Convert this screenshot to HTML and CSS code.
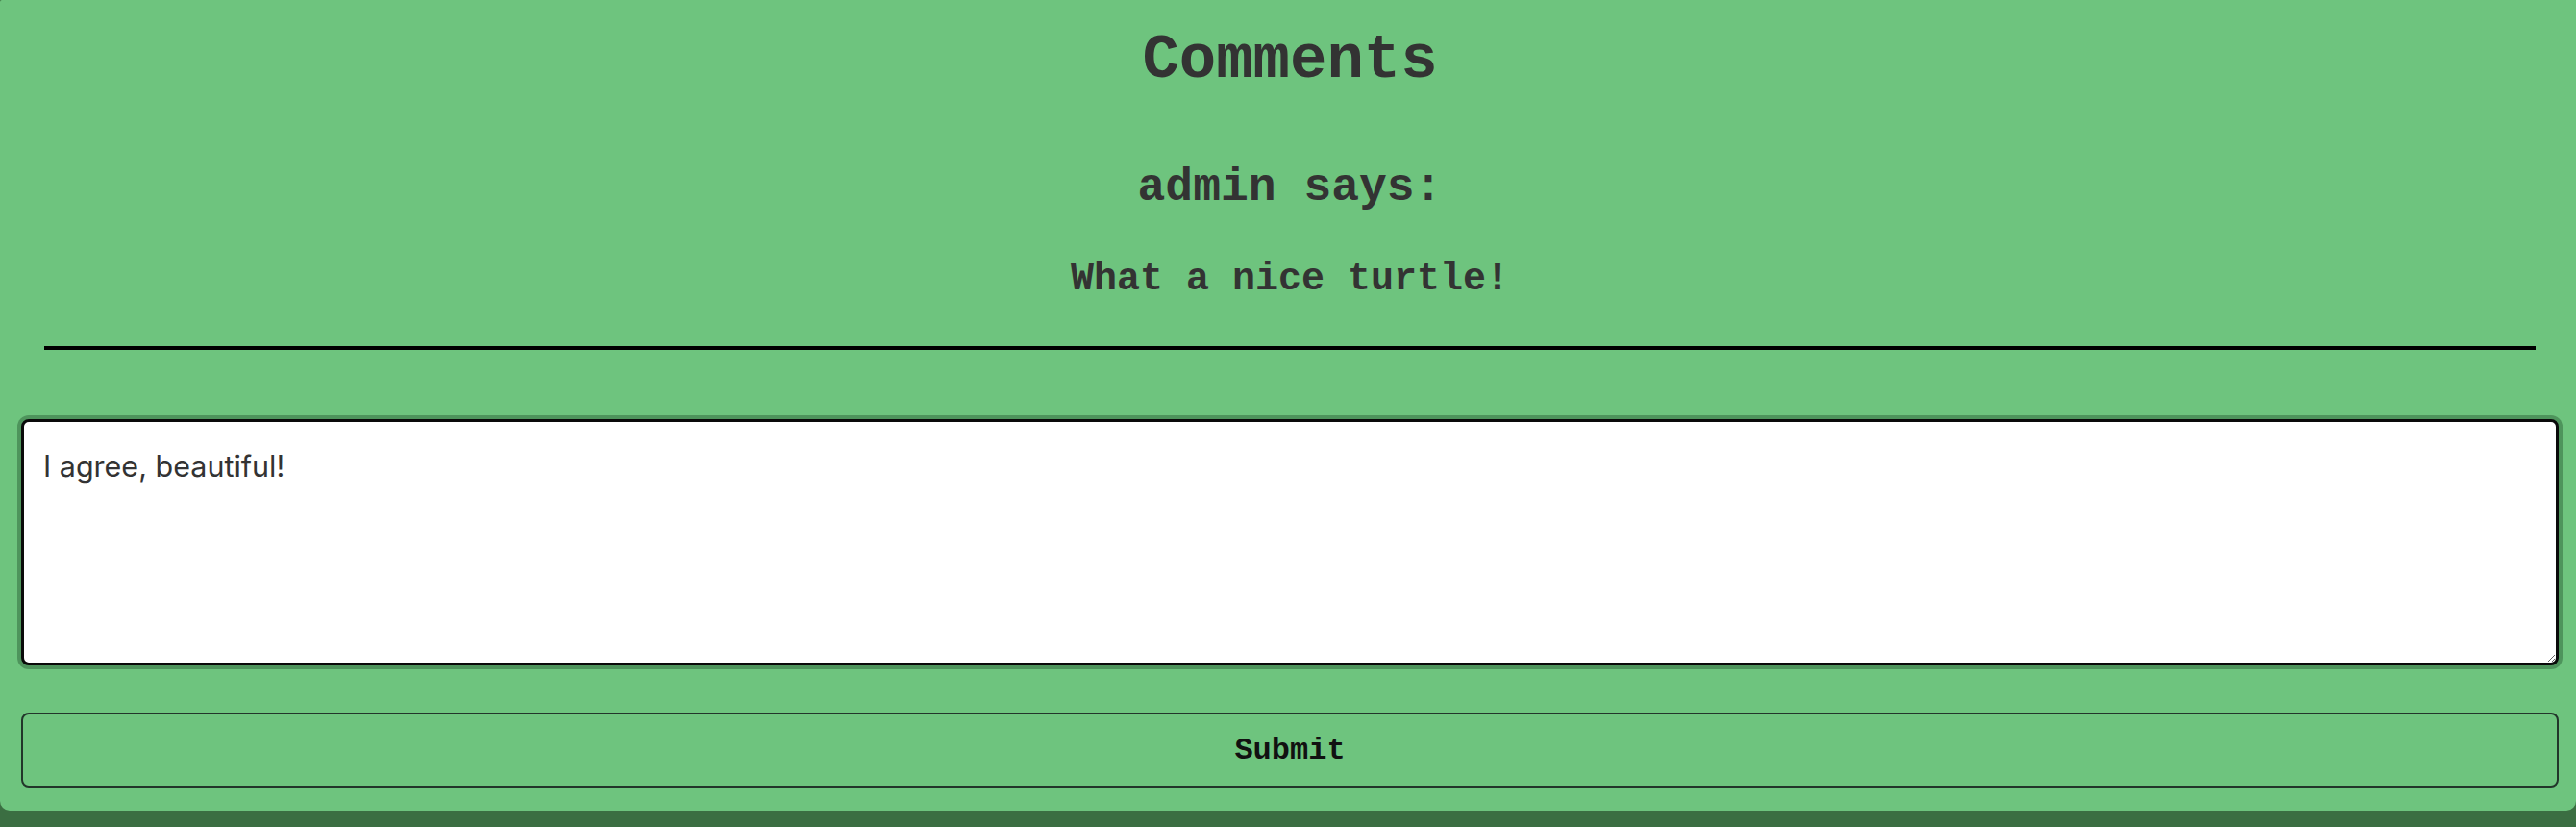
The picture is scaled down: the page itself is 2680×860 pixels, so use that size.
FILE: index.html
```html
<!DOCTYPE html>
<html lang="en">
<head>
<meta charset="utf-8">
<title>Comments</title>
<link rel="stylesheet" href="styles.css">
</head>
<body>
<section class="card">
  <h1 class="title">Comments</h1>
  <div class="comment">
    <h2 class="author">admin says:</h2>
    <p class="text">What a nice turtle!</p>
  </div>
  <hr class="divider">
  <form class="form">
    <textarea class="input" name="comment">I agree, beautiful!</textarea>
    <button class="submit" type="button">Submit</button>
  </form>
</section>
</body>
</html>
```
FILE: styles.css
```css
html, body {
  margin: 0;
  padding: 0;
}
body {
  background: #3b6e42;
  min-height: 860px;
}
.card {
  background: #6ec47e;
  padding: 31px 18px 24px 22px;
  border-radius: 2px 0 10px 10px;
  display: flex;
  flex-direction: column;
}
.title {
  margin: 0;
  font-family: "Liberation Mono", "Courier New", monospace;
  font-weight: bold;
  font-size: 64px;
  line-height: 64px;
  color: #333;
  text-align: center;
}
.comment {
  display: flex;
  flex-direction: column;
  align-items: center;
}
.author {
  margin: 76px 0 0;
  font-family: "Liberation Mono", "Courier New", monospace;
  font-weight: bold;
  font-size: 48px;
  line-height: 48px;
  color: #333;
}
.text {
  margin: 52px 0 0;
  font-family: "Liberation Mono", "Courier New", monospace;
  font-weight: bold;
  font-size: 40px;
  line-height: 40px;
  color: #333;
}
.divider {
  margin: 49px 24px 0;
  height: 4px;
  border: 0;
  background: #000;
}
.form {
  display: flex;
  flex-direction: column;
  margin: 0;
}
.input {
  display: block;
  box-sizing: border-box;
  width: 100%;
  height: 256px;
  margin: 72px 0 0;
  padding: 22px 20px;
  border: 3px solid #0a0a0a;
  border-radius: 8px;
  background: #fff;
  color: #333;
  font-family: Inter, "Noto Sans", sans-serif;
  font-size: 30.5px;
  line-height: 48px;
  box-shadow: 0 0 0 4px rgba(40, 90, 50, 0.45);
  outline: none;
}
.submit {
  display: block;
  box-sizing: border-box;
  width: 100%;
  height: 78px;
  margin: 49px 0 0;
  padding: 0;
  border: 2px solid #22352a;
  border-radius: 8px;
  background: transparent;
  color: #111;
  font-family: "Liberation Mono", "Courier New", monospace;
  font-weight: bold;
  font-size: 32px;
  cursor: pointer;
}
```
